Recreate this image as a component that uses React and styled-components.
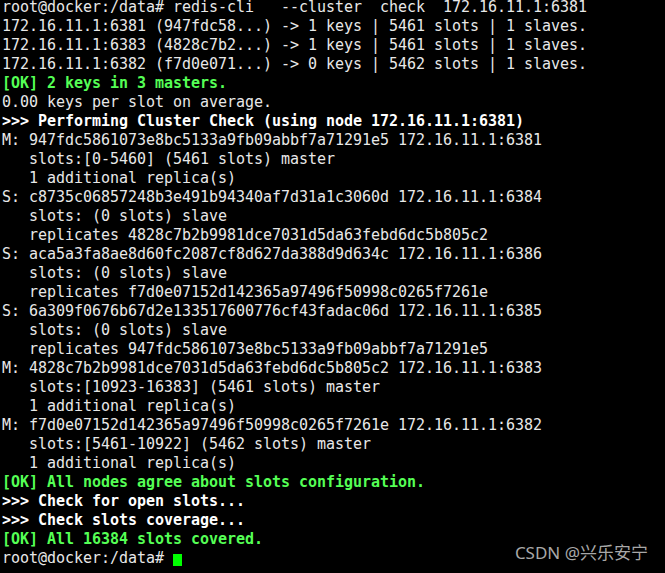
import React from "react";
import styled, { createGlobalStyle } from "styled-components";

const GlobalStyle = createGlobalStyle`
  html, body {
    margin: 0;
    padding: 0;
    background: #000;
  }
  body {
    width: 665px;
    height: 573px;
    overflow: hidden;
  }
`;

const cmd = "root@docker:/data# ";

const lines = [
  { text: cmd + "redis-cli   --cluster  check  172.16.11.1:6381" },
  { text: "172.16.11.1:6381 (947fdc58...) -> 1 keys | 5461 slots | 1 slaves." },
  { text: "172.16.11.1:6383 (4828c7b2...) -> 1 keys | 5461 slots | 1 slaves." },
  { text: "172.16.11.1:6382 (f7d0e071...) -> 0 keys | 5462 slots | 1 slaves." },
  { text: "[OK] 2 keys in 3 masters.", kind: "ok" },
  { text: "0.00 keys per slot on average." },
  { text: ">>> Performing Cluster Check (using node 172.16.11.1:6381)", kind: "head" },
  { text: "M: 947fdc5861073e8bc5133a9fb09abbf7a71291e5 172.16.11.1:6381" },
  { text: "   slots:[0-5460] (5461 slots) master" },
  { text: "   1 additional replica(s)" },
  { text: "S: c8735c06857248b3e491b94340af7d31a1c3060d 172.16.11.1:6384" },
  { text: "   slots: (0 slots) slave" },
  { text: "   replicates 4828c7b2b9981dce7031d5da63febd6dc5b805c2" },
  { text: "S: aca5a3fa8ae8d60fc2087cf8d627da388d9d634c 172.16.11.1:6386" },
  { text: "   slots: (0 slots) slave" },
  { text: "   replicates f7d0e07152d142365a97496f50998c0265f7261e" },
  { text: "S: 6a309f0676b67d2e133517600776cf43fadac06d 172.16.11.1:6385" },
  { text: "   slots: (0 slots) slave" },
  { text: "   replicates 947fdc5861073e8bc5133a9fb09abbf7a71291e5" },
  { text: "M: 4828c7b2b9981dce7031d5da63febd6dc5b805c2 172.16.11.1:6383" },
  { text: "   slots:[10923-16383] (5461 slots) master" },
  { text: "   1 additional replica(s)" },
  { text: "M: f7d0e07152d142365a97496f50998c0265f7261e 172.16.11.1:6382" },
  { text: "   slots:[5461-10922] (5462 slots) master" },
  { text: "   1 additional replica(s)" },
  { text: "[OK] All nodes agree about slots configuration.", kind: "ok" },
  { text: ">>> Check for open slots...", kind: "head" },
  { text: ">>> Check slots coverage...", kind: "head" },
  { text: "[OK] All 16384 slots covered.", kind: "ok" },
];

function App() {
  return (
    <>
      <GlobalStyle />
      <Terminal>
        {lines.map((line, i) => (
          <Line key={i} kind={line.kind}>
            {line.text}
          </Line>
        ))}
        <Line>
          {cmd}
          <Cursor />
        </Line>
      </Terminal>
      <Watermark>CSDN @兴乐安宁</Watermark>
    </>
  );
}

const Terminal = styled.pre`
  margin: -2px 0 0 0;
  padding: 0 0 0 2px;
  font-family: "DejaVu Sans Mono", "Liberation Mono", monospace;
  font-size: 15px;
  letter-spacing: -0.03px;
  line-height: 19px;
  color: #e8e8e8;
  white-space: pre;
`;

const Line = styled.div`
  height: 19px;
  ${(props) =>
    props.kind === "ok" &&
    `
    color: #55ff55;
    font-weight: bold;
  `}
  ${(props) =>
    props.kind === "head" &&
    `
    color: #ffffff;
    font-weight: bold;
  `}
`;

const Cursor = styled.span`
  display: inline-block;
  width: 9px;
  height: 12px;
  background: #00ff00;
  vertical-align: -3px;
`;

const Watermark = styled.div`
  position: absolute;
  right: 17px;
  bottom: 9px;
  font-family: "Noto Sans", "Noto Sans CJK SC", sans-serif;
  font-size: 17px;
  color: #a8a8a8;
`;

export default App;
